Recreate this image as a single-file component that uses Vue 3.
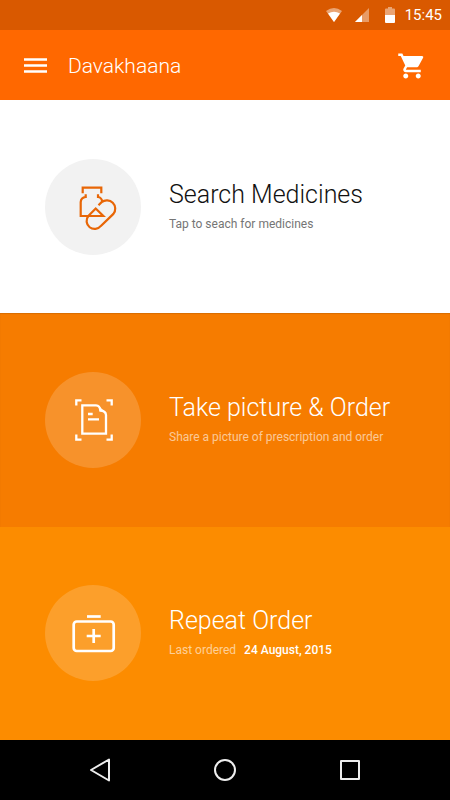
<script setup>
const cards = [
  { id: 'search', title: 'Search Medicines', note: 'Tap to seach for medicines' },
  { id: 'picture', title: 'Take picture & Order', note: 'Share a picture of prescription and order' },
  { id: 'repeat', title: 'Repeat Order', note: 'Last ordered', strong: '24 August, 2015' }
]
</script>

<template>
  <div class="screen">
    <div class="status">
      <svg class="wifi" width="16" height="16" viewBox="0 0 16 16" aria-hidden="true">
        <path d="M0 4Q8-2 16 4L8 15Z" fill="#fff" opacity=".45" />
        <path d="M2 6.500Q8 3 14 6.500L8 15Z" fill="#fff" />
      </svg>
      <svg class="signal" width="14" height="14" viewBox="0 0 14 14" aria-hidden="true">
        <path d="M14 0V14H0Z" fill="#fff" opacity=".4" />
        <path d="M7 7V14H0Z" fill="#fff" />
      </svg>
      <svg class="battery" width="10" height="16" viewBox="0 0 10 16" aria-hidden="true">
        <path d="M3 0H7V1.500H9Q10 1.500 10 2.500V8H0V2.500Q0 1.500 1 1.500H3Z" fill="#fff" opacity=".45" />
        <path d="M0 8H10V15Q10 16 9 16H1Q0 16 0 15Z" fill="#fff" />
      </svg>
      <span class="time">15:45</span>
    </div>

    <header class="bar">
      <button class="icon-button" aria-label="Menu">
        <svg width="24" height="16" viewBox="0 0 24 16" aria-hidden="true">
          <path d="M0 1.500H23M0 7.500H23M0 13.500H23" stroke="#fff" stroke-width="2.400" />
        </svg>
      </button>
      <h1>Davakhaana</h1>
      <button class="icon-button" aria-label="Cart">
        <svg width="30" height="30" viewBox="0 0 24 24" aria-hidden="true">
          <path fill="#fff" d="M7 18c-1.100 0-1.990.9-1.990 2S5.900 22 7 22s2-.9 2-2-.9-2-2-2zM1 2v2h2l3.600 7.590-1.350 2.450c-.16.280-.25.610-.25.960 0 1.100.9 2 2 2h12v-2H7.420c-.14 0-.25-.11-.25-.25l.03-.12.9-1.630h7.450c.750 0 1.410-.41 1.750-1.030l3.580-6.490A1 1 0 0 0 20 4H5.210l-.94-2H1zm16 16c-1.100 0-1.990.9-1.990 2s.89 2 1.990 2 2-.9 2-2-.9-2-2-2z" />
        </svg>
      </button>
    </header>

    <main class="cards">
      <button v-for="card in cards" :key="card.id" class="card" :class="card.id">
        <span class="disc">
          <svg width="96" height="96" viewBox="0 0 96 96" fill="none" aria-hidden="true">
            <g v-if="card.id === 'search'" stroke="#e86606" stroke-width="2.200">
              <path d="M37.700 34.300V28.700H56.300V34.300" />
              <path d="M40.700 35.300V38Q36 38.500 35.700 43V57H58.300L50.700 49.500L43.300 57" />
              <path d="M53 35.300V38Q56.500 38.500 57.300 42.500" />
              <path d="M53.500 46.200L56.600 43.100A8.400 8.400 0 0 1 68.400 54.900L55.900 66.900A8 8 0 0 1 43.300 57" />
            </g>
            <g v-else-if="card.id === 'picture'" stroke="#fff" stroke-width="2.300">
              <path d="M31.300 33.500V28.300H36.500M61.500 28.300H66.700V33.500M66.700 62.500V67.700H61.500M36.500 67.700H31.300V62.500" />
              <path d="M37.300 33.300H51Q55 33.500 55.300 38.500Q60.700 39 61 43V61.700H37.300Z" />
              <path d="M54 34L60.500 40.500L55.300 39Z" fill="#fff" stroke="none" />
              <path d="M43 42H47.700M43 47.300H54" />
            </g>
            <g v-else stroke="#fff" stroke-width="2.700">
              <path d="M42 31.500H55.700" />
              <rect x="28.700" y="36.500" width="40" height="29.500" rx="3" />
              <path d="M48.700 44V58M41.700 51H55.700" />
            </g>
          </svg>
        </span>
        <span class="text">
          <span class="title">{{ card.title }}</span>
          <span class="note">{{ card.note }}<b v-if="card.strong">{{ card.strong }}</b></span>
        </span>
      </button>
    </main>

    <nav class="nav" aria-label="System">
      <button aria-label="Back">
        <svg width="24" height="24" viewBox="0 0 24 24" aria-hidden="true"><path d="M3 12L21 1.500V22.500Z" /></svg>
      </button>
      <button aria-label="Home">
        <svg width="24" height="24" viewBox="0 0 24 24" aria-hidden="true"><circle cx="12" cy="12" r="10" /></svg>
      </button>
      <button aria-label="Recent apps">
        <svg width="24" height="24" viewBox="0 0 24 24" aria-hidden="true"><rect x="3" y="3" width="18" height="18" /></svg>
      </button>
    </nav>
  </div>
</template>

<style>
body {
  background: #000;
}
</style>

<style scoped>
.screen {
  display: flex;
  flex-direction: column;
  min-height: 100vh;
  font-family: Roboto, "Liberation Sans", sans-serif;
  color: #fff;
}
button {
  border: 0;
  padding: 0;
  background: none;
  color: inherit;
  font: inherit;
  text-align: left;
  cursor: pointer;
}
svg {
  display: block;
}
.status {
  display: flex;
  align-items: center;
  justify-content: flex-end;
  height: 30px;
  padding-right: 8px;
  background: #d95900;
}
.signal {
  margin-left: 13px;
}
.battery {
  margin-left: 16px;
}
.time {
  margin-left: 10px;
  font-size: 15px;
}
.bar {
  display: flex;
  align-items: center;
  box-sizing: border-box;
  height: 70px;
  padding: 2px 23px 0 24px;
  background: #ff6800;
}
h1 {
  flex: 1;
  margin: 0 0 0 20px;
  font-size: 21px;
  font-weight: 300;
}
.cards {
  display: flex;
  flex: 1;
  flex-direction: column;
}
.card {
  display: flex;
  flex: 1;
  align-items: center;
  gap: 28px;
  padding: 0 45px;
}
.search {
  background: #fff;
  color: #111;
}
.picture {
  background: #f67c00;
  box-shadow: inset 0 1px 1px #d96d00;
}
.repeat {
  background: #fc8c00;
}
.disc {
  flex: none;
  border-radius: 50%;
  background: rgba(255, 255, 255, 0.17);
}
.search .disc {
  background: #f2f2f2;
}
.text {
  display: flex;
  flex-direction: column;
  gap: 6px;
  padding-bottom: 2px;
}
.title {
  font-size: 25px;
  font-weight: 300;
  line-height: 30px;
}
.note {
  font-size: 12px;
  line-height: 16px;
  color: rgba(255, 255, 255, 0.6);
}
.search .note {
  color: #757575;
}
.note b {
  margin-left: 8px;
  font-weight: 500;
  color: #fff;
}
.nav {
  display: flex;
  align-items: center;
  justify-content: space-between;
  height: 60px;
  padding: 0 88px;
  background: #000;
}
.nav path,
.nav circle,
.nav rect {
  fill: none;
  stroke: #eee;
  stroke-width: 2;
  stroke-linejoin: round;
}
</style>
